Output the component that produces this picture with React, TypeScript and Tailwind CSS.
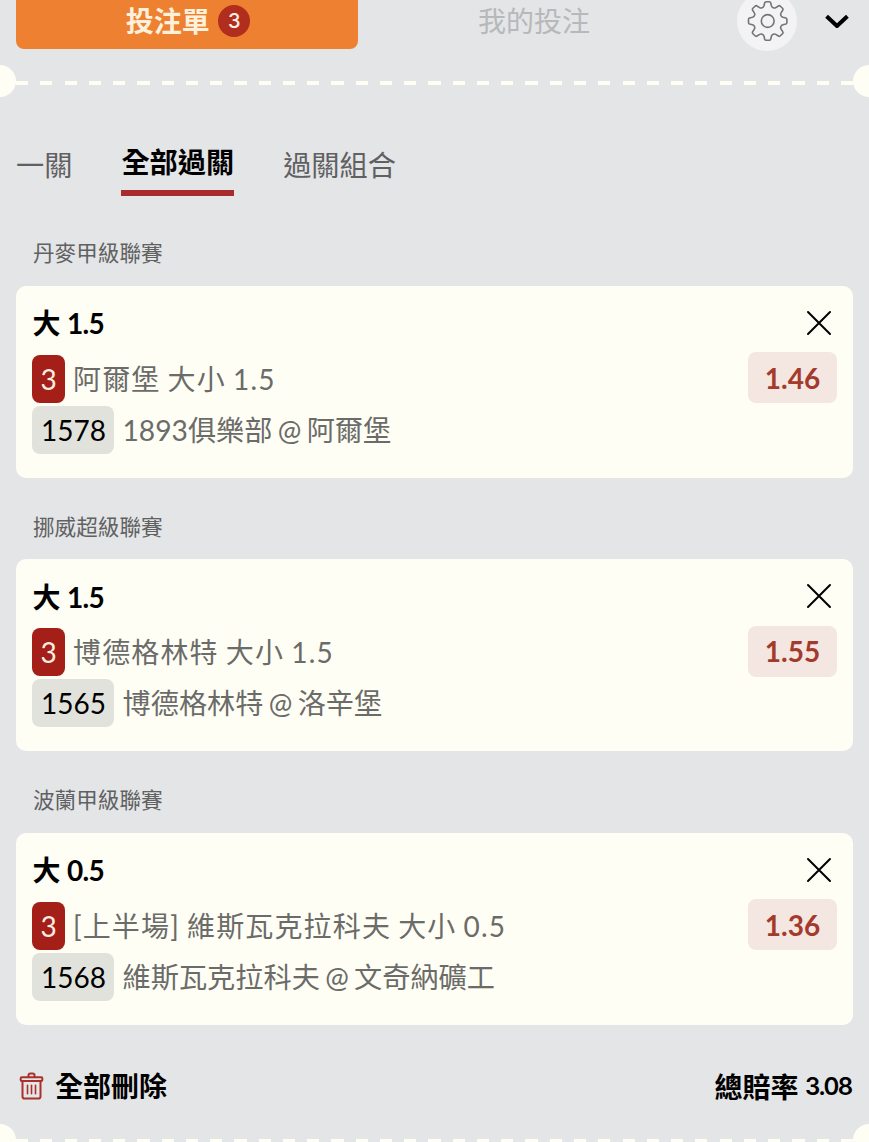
type Bet = {
  league: string;
  pick: string;
  line: string;
  market: string;
  code: string;
  home: string;
  away: string;
  odds: string;
};

const bets: Bet[] = [
  { league: "丹麥甲級聯賽", pick: "大", line: "1.5", market: "阿爾堡 大小 1.5", code: "1578", home: "1893俱樂部", away: "阿爾堡", odds: "1.46" },
  { league: "挪威超級聯賽", pick: "大", line: "1.5", market: "博德格林特 大小 1.5", code: "1565", home: "博德格林特", away: "洛辛堡", odds: "1.55" },
  { league: "波蘭甲級聯賽", pick: "大", line: "0.5", market: "[上半場] 維斯瓦克拉科夫 大小 0.5", code: "1568", home: "維斯瓦克拉科夫", away: "文奇納礦工", odds: "1.36" },
];

function GearIcon() {
  return (
    <svg width="42" height="42" viewBox="-21.7 -21 42 42" fill="none" stroke="#737476" strokeWidth="1.6" strokeLinejoin="round">
      <circle r="6.4" />
      <path d="M-3 -18.2Q-2.7 -19.2 -1.5 -19.2H1.5Q2.7 -19.2 3 -18.2L3.7 -15.2Q4.1 -13.8 5.5 -13.2Q6.9 -12.6 8.1 -13.4L10.7 -15Q11.8 -15.7 12.7 -14.8L14.8 -12.7Q15.7 -11.8 15 -10.7L13.4 -8.1Q12.6 -6.9 13.2 -5.5Q13.8 -4.1 15.2 -3.7L18.2 -3Q19.2 -2.7 19.2 -1.5V1.5Q19.2 2.7 18.2 3L15.2 3.7Q13.8 4.1 13.2 5.5Q12.6 6.9 13.4 8.1L15 10.7Q15.7 11.8 14.8 12.7L12.7 14.8Q11.8 15.7 10.7 15L8.1 13.4Q6.9 12.6 5.5 13.2Q4.1 13.8 3.7 15.2L3 18.2Q2.7 19.2 1.5 19.2H-1.5Q-2.7 19.2 -3 18.2L-3.7 15.2Q-4.1 13.8 -5.5 13.2Q-6.9 12.6 -8.1 13.4L-10.7 15Q-11.8 15.7 -12.7 14.8L-14.8 12.7Q-15.7 11.8 -15 10.7L-13.4 8.1Q-12.6 6.9 -13.2 5.5Q-13.8 4.1 -15.2 3.7L-18.2 3Q-19.2 2.7 -19.2 1.5V-1.5Q-19.2 -2.7 -18.2 -3L-15.2 -3.7Q-13.8 -4.1 -13.2 -5.5Q-12.6 -6.9 -13.4 -8.1L-15 -10.7Q-15.7 -11.8 -14.8 -12.7L-12.7 -14.8Q-11.8 -15.7 -10.7 -15L-8.1 -13.4Q-6.9 -12.6 -5.5 -13.2Q-4.1 -13.8 -3.7 -15.2Z" />
    </svg>
  );
}

function TrashIcon() {
  return (
    <svg width="25" height="28" viewBox="-0.5 0 25 28" fill="none" stroke="#a9302d" strokeWidth="2" strokeLinejoin="round" strokeLinecap="round">
      <path d="M9 5V3.2Q9 1.4 10.8 1.4H13.2Q15 1.4 15 3.2V5" />
      <rect x="1.2" y="5.2" width="21.6" height="3.8" rx="1" />
      <path d="M3 9V24.5Q3 26.6 5.1 26.6H18.9Q21 26.6 21 24.5V9" />
      <path d="M8 13.3V21.8M12 13.3V21.8M16 13.3V21.8" strokeWidth="1.6" />
    </svg>
  );
}

function TicketDivider() {
  return (
    <div className="flex h-8 w-[901px] -mx-4 shrink-0 items-center">
      <div className="size-8 shrink-0 rounded-full bg-[#fefef5]" />
      <div className="mt-[4px] h-[4.5px] flex-1 bg-[repeating-linear-gradient(90deg,#fefef5_0_12.2px,transparent_12.2px_24.26px)]" />
      <div className="size-8 shrink-0 rounded-full bg-[#fefef5]" />
    </div>
  );
}

function BetSection({ bet }: { bet: Bet }) {
  return (
    <section className="flex h-[273.5px] shrink-0 flex-col px-4">
      <h2 className="mt-[33px] h-[32px] pl-[17px] text-[21.6px] leading-[32px] text-[#606162]">{bet.league}</h2>
      <div className="mt-[16.5px] flex h-[192px] justify-between rounded-[10px] bg-[#fefef5] pr-4 pl-4">
        <div className="flex flex-col">
          <div className="mt-[17.5px] flex h-10 items-center text-[28px] leading-10 font-bold text-black">
            <span className="pl-[0.5px]">{bet.pick}</span>
            <span className="ml-[6.5px] tracking-[-0.7px]">{bet.line}</span>
          </div>
          <div className="mt-[11.5px] flex h-12 items-center">
            <span className="flex h-12 w-[33px] items-center justify-center rounded-[8px] bg-[#a31f17] text-[28px] text-[#fdeee4]">3</span>
            <span className="ml-[8px] text-[28px] leading-10 tracking-[1.15px] [word-spacing:-1.2px] whitespace-nowrap text-[#6b6b69]">{bet.market}</span>
          </div>
          <div className="mt-[3px] flex h-12 items-center">
            <span className="flex h-12 w-[82px] items-center justify-center rounded-[8px] bg-[#e2e2dc] pl-px text-[28px] text-black">{bet.code}</span>
            <span className="ml-[8.5px] flex text-[28.2px] leading-10 whitespace-nowrap text-[#6b6b69]">
              <span>{bet.home}</span>
              <span className="mx-[5.3px]">@</span>
              <span>{bet.away}</span>
            </span>
          </div>
        </div>
        <div className="flex flex-col items-end">
          <button aria-label="移除" className="mt-[24px] mr-[5px]">
            <svg width="26" height="26" viewBox="0 0 26 26" fill="none" stroke="#000" strokeWidth="2" strokeLinecap="round">
              <path d="M2 2L24 24M24 2L2 24" />
            </svg>
          </button>
          <span className="mt-[16.5px] flex h-[51px] w-[89px] items-center justify-center rounded-[8px] bg-[#f4e6e1] text-[28px] font-bold text-[#a33a2c]">{bet.odds}</span>
        </div>
      </div>
    </section>
  );
}

export default function App() {
  return (
    <main className="flex h-[1142px] w-[869px] flex-col overflow-hidden bg-[#e4e5e7] font-[Lato,'Noto_Sans_CJK_TC',sans-serif]">
      <header className="flex h-[65px] shrink-0 items-start pl-4">
        <button className="flex h-[49px] w-[342px] items-start justify-center rounded-b-[8px] bg-[#ee8031]">
          <span className="flex h-[41px] items-center pl-[2px] text-[28px] font-bold text-[#fdf1dc]">
            投注單
            <span className="ml-[8.5px] flex size-8 items-center justify-center rounded-full bg-[#b12d1e] font-[Inter,sans-serif] text-[20px] font-medium text-[#fdeee4]">3</span>
          </span>
        </button>
        <button className="flex h-[42px] w-[352px] items-center justify-center text-[28px] text-[#b7b8ba]">我的投注</button>
        <button aria-label="設定" className="-mt-[9.5px] ml-[27px] flex size-[60px] shrink-0 items-center justify-center rounded-full bg-[#f3f3f5]">
          <GearIcon />
        </button>
        <button aria-label="收合" className="mt-[14px] ml-[28px]">
          <svg width="24" height="16" viewBox="0 0 24 16" fill="none" stroke="#000" strokeWidth="4">
            <path d="M1.6 2.2L12 12L22.4 2.2" strokeLinejoin="round" />
          </svg>
        </button>
      </header>
      <TicketDivider />
      <nav className="flex h-[107px] shrink-0 gap-[49px] pl-4 text-[28.2px] leading-10 text-[#5f6062]">
        <button className="mt-[48px] h-10">一關</button>
        <button className="mt-[45px] h-[54px] border-b-[6px] border-[#a82b2d] font-bold text-black">
          <span className="block h-[48px]">全部過關</span>
        </button>
        <button className="mt-[48px] h-10">過關組合</button>
      </nav>
      {bets.map((bet) => (
        <BetSection key={bet.code} bet={bet} />
      ))}
      <footer className="flex h-[99px] shrink-0 items-start justify-between pt-[41px] pr-4 pl-[19px] text-[28px] leading-10 font-bold text-black">
        <button className="flex h-10 items-center">
          <TrashIcon />
          <span className="ml-[11px]">全部刪除</span>
        </button>
        <div className="mt-px flex h-10 items-center">
          總賠率
          <span className="mr-[1.4px] ml-[6.5px] pt-px font-[Inter,sans-serif] text-[24px] font-semibold tracking-[-1.6px]">3.08</span>
        </div>
      </footer>
      <TicketDivider />
    </main>
  );
}
